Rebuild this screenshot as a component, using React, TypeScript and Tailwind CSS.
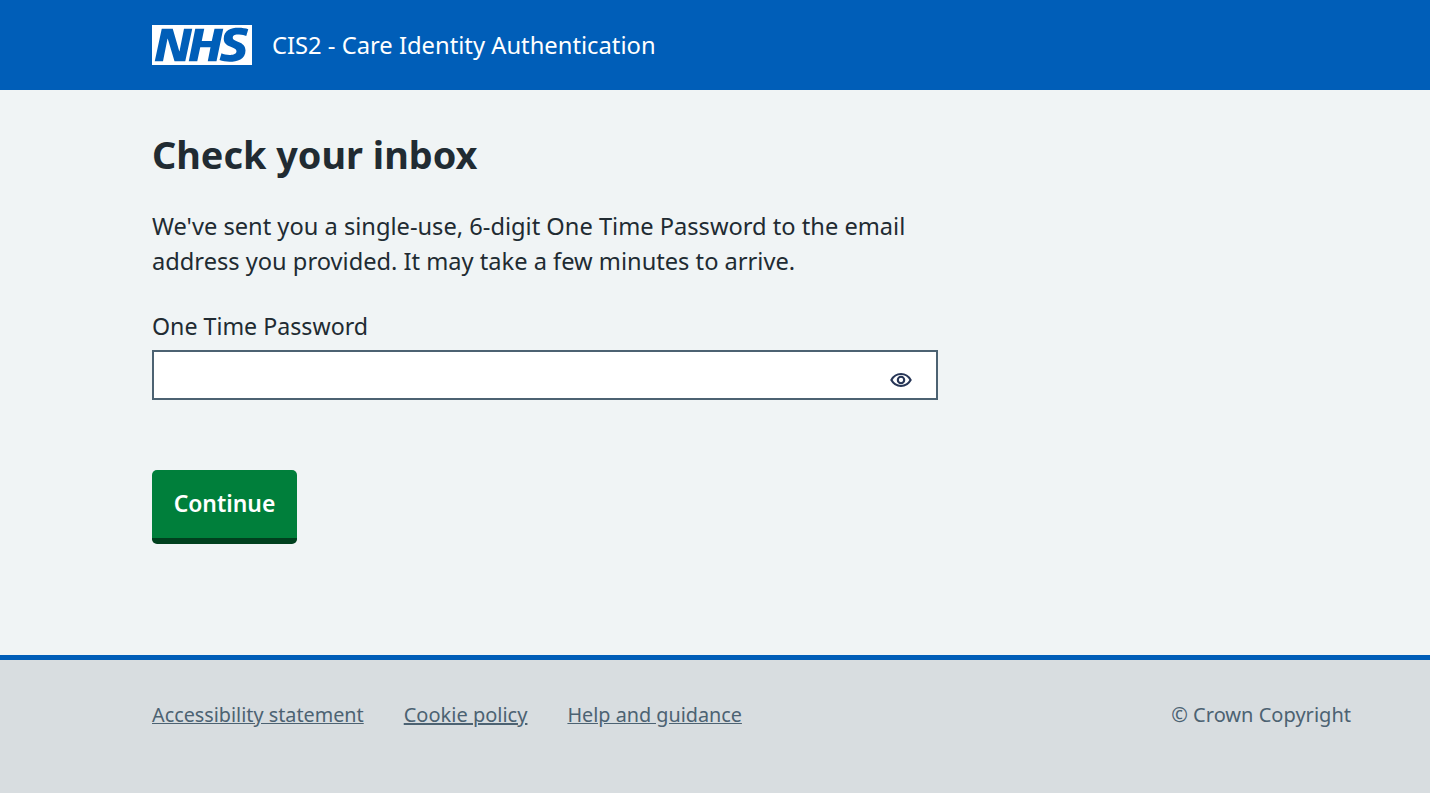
import React from 'react'

export default function App() {
  return (
    <div className="min-h-[793px] flex flex-col bg-[#f0f4f5] text-[#212b32] font-['Noto_Sans',sans-serif]">
      <header className="h-[90px] bg-[#005eb8] flex items-center pl-[152px]">
        <svg className="w-[100px] h-[40px]" viewBox="0 0 40 16" aria-label="NHS">
          <path fill="#fff" d="M0 0h40v16H0z" />
          <path
            fill="#005eb8"
            d="M3.9 1.5h4.4l2.6 9h.1l1.800-9h3.300l-2.800 13H9l-2.700-9h-.1l-1.800 9H1.100M17.300 1.500h3.600l-1 4.900h4L25 1.500h3.500l-2.700 13h-3.500l1.100-5.600h-4.100l-1.200 5.600h-3.400M37.700 4.400c-.7-.3-1.600-.6-2.900-.6-1.400 0-2.500.2-2.500 1.300 0 1.800 5.100 1.200 5.100 5.100 0 3.600-3.300 4.500-6.400 4.500-1.300 0-2.900-.3-4-.7l.8-2.700c.7.4 2.100.7 3.200.7s2.800-.2 2.800-1.500c0-2.100-5.100-1.300-5.100-5 0-3.400 2.900-4.400 5.800-4.400 1.600 0 3.100.2 4 .6"
          />
        </svg>
        <span className="ml-5 pt-[2px] text-[23.75px] text-white">CIS2 - Care Identity Authentication</span>
      </header>

      <main className="h-[565px] pl-[152px] pt-[40px]">
        <h1 className="text-[37.85px] leading-[50px] font-bold">Check your inbox</h1>
        <p className="mt-[29px] w-[786px] text-[23.65px] leading-[35px]">
          We've sent you a single-use, 6-digit One Time Password to the email address you provided. It may take a few
          minutes to arrive.
        </p>
        <label className="block mt-[30px] text-[23.2px] leading-[35px]">One Time Password</label>
        <div className="relative mt-[6px] w-[786px] h-[50px] border-2 border-[#4c6272] bg-white">
          <input className="w-full h-full outline-none px-2" type="password" />
          <svg className="absolute right-[24px] top-[17px] w-[22px] h-[22px]" viewBox="0 0 24 24" fill="none" stroke="#263556" strokeWidth="2.3">
            <path d="M1.500 12C4 7.500 7.500 5.500 12 5.500s8 2 10.500 6.500c-2.500 4.500-6 6.500-10.500 6.500S4 16.500 1.500 12z" />
            <circle cx="12" cy="12" r="3.500" />
          </svg>
        </div>
        <button className="block mt-[70px] w-[145px] h-[74px] rounded-[5px] bg-[#007f3b] border-b-[6px] border-[#00401e] text-white text-[22.9px] font-semibold">
          Continue
        </button>
      </main>

      <footer className="h-[138px] border-t-[5px] border-[#005eb8] bg-[#d8dde0] flex items-start justify-between pl-[152px] pr-[79px] pt-[41px] text-[19.8px] leading-[28px] text-[#4c6272]">
        <div className="flex gap-10">
          <a className="underline" href="#">Accessibility statement</a>
          <a className="underline text-[20px]" href="#">Cookie policy</a>
          <a className="underline" href="#">Help and guidance</a>
        </div>
        <span className="text-[20.05px]">© Crown Copyright</span>
      </footer>
    </div>
  )
}
